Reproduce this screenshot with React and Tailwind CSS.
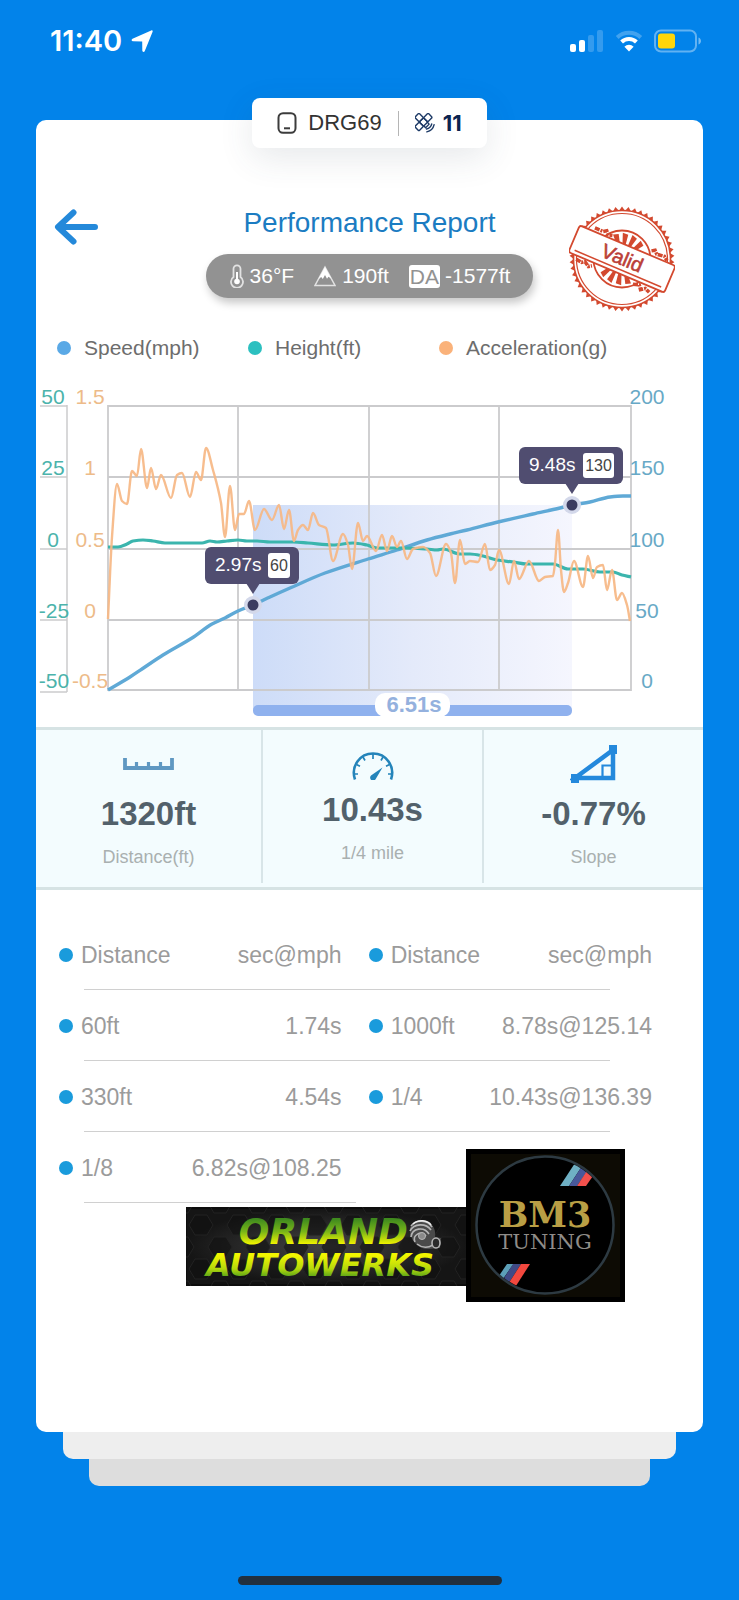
import React from "react";

const ACCELERATION = [
  [108, 619], [112, 537], [117, 484], [122, 501], [127, 504], [132, 471], [137, 476], [141, 449], [147, 488],
  [151, 468], [156, 489], [161, 475], [171, 498], [177, 475], [182, 473], [190, 497], [196, 472], [201, 480],
  [206, 448], [213, 470], [221, 503], [225, 537], [230, 486], [235, 530], [239, 514], [244, 514], [249, 501],
  [255, 530], [264, 509], [272, 520], [279, 505], [284, 529], [289, 510], [294, 541], [298, 530], [303, 525],
  [308, 530], [313, 513], [319, 525], [326, 528], [333, 561], [343, 534], [348, 545], [352, 569], [358, 523],
  [363, 541], [367, 536], [376, 551], [382, 535], [387, 551], [392, 536], [397, 547], [401, 541], [407, 559],
  [413, 549], [423, 547], [430, 553], [436, 576], [446, 544], [451, 553], [455, 583], [460, 540], [465, 564],
  [470, 561], [478, 562], [485, 544], [490, 570], [495, 565], [499, 550], [509, 584], [514, 561], [519, 579],
  [529, 561], [539, 581], [545, 577], [553, 576], [555, 563], [558, 530], [561, 570], [564, 592], [568, 583],
  [574, 561], [583, 587], [588, 556], [593, 578], [597, 567], [603, 565], [607, 590], [612, 570], [617, 600],
  [622, 593], [627, 605], [630, 621],
];

const HEIGHT = [
  [108, 547], [118, 547], [127, 544], [133, 541], [143, 540], [153, 541], [165, 543], [202, 543], [210, 541],
  [217, 542], [227, 541], [238, 540], [247, 541], [257, 541], [270, 542], [293, 542], [308, 543], [333, 545],
  [353, 543], [367, 545], [377, 548], [403, 548], [427, 549], [437, 550], [443, 549], [460, 554], [470, 554],
  [483, 556], [497, 560], [513, 562], [527, 564], [553, 564], [568, 569], [583, 569], [600, 572], [613, 572],
  [622, 575], [631, 577],
];

const SPEED = [
  [108, 690], [130, 677], [142, 669], [163, 655], [192, 638], [212, 624], [225, 618], [238, 611], [253, 605],
  [270, 597], [290, 588], [325, 573], [368, 559], [397, 550], [427, 540], [450, 534], [467, 530], [498, 522],
  [533, 514], [560, 508], [572, 505], [590, 502], [610, 497], [623, 496], [631, 496],
];

/* Smooth curve through the points, flat at every turning point. */
function curve(points) {
  const n = points.length;
  const slopes = points.map((p, i) => {
    if (i === 0 || i === n - 1) return 0;
    const a = (p[1] - points[i - 1][1]) / (p[0] - points[i - 1][0]);
    const b = (points[i + 1][1] - p[1]) / (points[i + 1][0] - p[0]);
    return a * b <= 0 ? 0 : (2 * a * b) / (a + b);
  });
  slopes[0] = (points[1][1] - points[0][1]) / (points[1][0] - points[0][0]);
  slopes[n - 1] = (points[n - 1][1] - points[n - 2][1]) / (points[n - 1][0] - points[n - 2][0]);
  let d = `M${points[0][0]} ${points[0][1]}`;
  for (let i = 1; i < n; i++) {
    const [x0, y0] = points[i - 1];
    const [x1, y1] = points[i];
    const h = (x1 - x0) / 3;
    d += `C${x0 + h} ${y0 + slopes[i - 1] * h} ${x1 - h} ${y1 - slopes[i] * h} ${x1} ${y1}`;
  }
  return d;
}

function StatusBar() {
  return (
    <header className="flex h-[82px] items-center justify-between pr-[37px] pl-[50px] text-white">
      <div className="flex items-center gap-2">
        <span className="font-[Inter,sans-serif] text-[29px] leading-8 font-semibold">11:40</span>
        <svg className="size-6" viewBox="0 0 24 24" aria-hidden="true">
          <path d="M21.200 1.400c1-.4 1.800.4 1.400 1.400l-7.800 19.200c-.6 1.400-2.500 1.100-2.500-.5l-.1-9-9.200-.2c-1.600 0-1.900-1.900-.5-2.500z" fill="#fff" />
        </svg>
      </div>
      <div className="flex items-center gap-[11px]">
        <svg className="h-6 w-[34px]" viewBox="0 0 34 24" aria-label="Signal" role="img">
          <rect x="0" y="15" width="6" height="8" rx="2" fill="#fff" />
          <rect x="9" y="11" width="6" height="12" rx="2" fill="#fff" />
          <rect x="18" y="6" width="6" height="17" rx="2" fill="#fff" opacity=".2" />
          <rect x="27" y="1" width="6" height="22" rx="2" fill="#fff" opacity=".2" />
        </svg>
        <svg className="h-6 w-7" viewBox="0 0 28 24" fill="none" aria-label="Wi-Fi" role="img">
          <path d="M2.200 8.500a17 17 0 0 1 23.600 0" stroke="#fff" strokeWidth="4" opacity=".25" />
          <path d="M6.600 13a10.600 10.600 0 0 1 14.800 0" stroke="#fff" strokeWidth="4" />
          <path d="M14 22.500l-4.600-4.800a6.600 6.600 0 0 1 9.200 0z" fill="#fff" />
        </svg>
        <svg className="h-6 w-12" viewBox="0 0 48 24" aria-label="Battery" role="img">
          <rect x="1" y="1.500" width="41" height="21" rx="6" fill="none" stroke="#fff" strokeWidth="2" opacity=".38" />
          <rect x="4" y="4.500" width="17" height="15" rx="3" fill="#ffd60a" />
          <path d="M44.500 8.500c3.300 1.200 3.300 5.800 0 7z" fill="#fff" opacity=".45" />
        </svg>
      </div>
    </header>
  );
}

function DeviceTab() {
  return (
    <div className="relative -mt-[22px] flex h-[50px] items-center self-center rounded-lg bg-white px-[25px] shadow-[0_10px_34px_rgba(60,70,90,0.12)]">
      <svg className="h-[22px] w-5" viewBox="0 0 20 22" fill="none" stroke="#3c3c3c" strokeWidth="2" aria-hidden="true">
        <rect x="1.500" y="1.200" width="17" height="19.600" rx="4.500" />
        <path d="M7 16.300h6" />
      </svg>
      <span className="ml-[11px] text-[22px] leading-7 text-[#333]">DRG69</span>
      <span className="mx-4 h-[25px] w-px bg-[#b5b5b5]" />
      <svg className="size-5" viewBox="0 0 20 20" fill="none" stroke="#1d3a66" strokeWidth="1.400" strokeLinecap="round" strokeLinejoin="round" aria-hidden="true">
        <g transform="translate(8.500 9) rotate(45)">
          <rect x="-3" y="-9.500" width="6" height="6.500" rx="1" />
          <rect x="-3" y="-3" width="6" height="6" rx="1" />
          <rect x="-3" y="3" width="6" height="6.500" rx="1" />
          <rect x="-9.500" y="-3" width="6.500" height="6" rx="1" />
          <path d="M3 -2.500h2.500v5H3" />
        </g>
        <path d="M11.500 16c2.700-.6 4.600-2.500 5.200-5M11.800 18.900c3.800-.8 6.500-3.500 7.300-7.200" />
      </svg>
      <span className="ml-2 font-[Inter,sans-serif] text-[22px] leading-7 font-bold text-[#0c2450]">11</span>
    </div>
  );
}

function ValidStamp() {
  const teeth = Array.from({ length: 50 }, (_, i) => i * 7.2);
  const rays = [-58, -36, -14, 8, 30, 52, 122, 144, 166, 188, 210, 232];
  return (
    <svg className="size-[106px]" viewBox="-53 -53 106 106" aria-label="Valid" role="img">
      <g fill="#d3492f">
        {teeth.map((a) => (
          <path key={a} d="M-2.800 -48.500L0 -52.500L2.800 -48.500z" transform={`rotate(${a})`} />
        ))}
      </g>
      <g fill="none" stroke="#d3492f">
        <circle r="48.500" strokeWidth="1.600" />
        <circle r="45.500" strokeWidth="1.200" />
        <circle r="28.500" strokeWidth="1.800" />
      </g>
      <g fill="#d3492f">
        {rays.map((a) => (
          <path key={a} d="M-1.300 -12L-2.800 -26L2.800 -25L1.300 -12z" transform={`rotate(${a})`} />
        ))}
      </g>
      <g transform="rotate(23)" stroke="#d3492f">
        <path d="M-37 -18h9l3-2 3 3 4-1M24 -19l3-2 3 3 8-1 4 3M-42 18l6 1 3-2 5 3 3-2M20 19l6-2 3 4 4-3 5 2" fill="none" strokeWidth="3.500" strokeDasharray="5 1 2 1" />
        <rect x="-52" y="-14.500" width="104" height="29" rx="2.500" fill="#fff" strokeWidth="1.800" />
        <path d="M-47 10.500H47" strokeWidth="1.500" />
        <text x="0" y="6" textAnchor="middle" fill="#bb3f38" stroke="#bb3f38" strokeWidth=".6" fontSize="20">Valid</text>
      </g>
    </svg>
  );
}

function ReportHeader() {
  return (
    <div className="mt-[58px] grid grid-cols-[1fr_auto_1fr] items-start px-[18px]">
      <button type="button" aria-label="Back" className="mt-[3px] h-9 w-11">
        <svg className="h-9 w-11" viewBox="0 0 44 36" fill="none" stroke="#2489da" strokeWidth="6" strokeLinecap="round" strokeLinejoin="round" aria-hidden="true">
          <path d="M41 18H4.500M19.500 3.500L4 18l15.500 14.500" />
        </svg>
      </button>
      <div className="flex flex-col items-center">
        <h1 className="text-[28px] leading-[34px] text-[#1b7cc2]">Performance Report</h1>
        <div className="mt-[14px] flex h-11 items-center rounded-full bg-[#929292] px-[23px] text-[21px] leading-7 text-white shadow-[2px_5px_8px_rgba(0,0,0,0.22)]">
          <svg className="h-6 w-4" viewBox="0 0 16 24" fill="none" aria-hidden="true">
            <path d="M4.500 13V4.800a3.500 3.500 0 0 1 7 0V13a6 6 0 1 1-7 0z" stroke="#e2e2e2" strokeWidth="1.800" />
            <path d="M8 8v9" stroke="#fff" strokeWidth="2" />
            <circle cx="8" cy="17.500" r="2.800" fill="#fff" />
          </svg>
          <span className="ml-[5px]">36°F</span>
          <svg className="ml-5 h-[22px] w-[22px]" viewBox="0 0 22 22" fill="none" aria-hidden="true">
            <path d="M11 2L21 20.500H1z" stroke="#e2e2e2" strokeWidth="1.500" />
            <path d="M11 2l6.200 11.500-2.700-1.800-1.500 2-2-3.700-2.200 4-1.600-2-2.700 2z" fill="#fff" />
          </svg>
          <span className="ml-1.5">190ft</span>
          <span className="ml-5 rounded-[3px] bg-white px-px leading-[23px] text-[#929292]">DA</span>
          <span className="ml-[5px]">-1577ft</span>
        </div>
      </div>
      <div className="mr-2.5 justify-self-end">
        <ValidStamp />
      </div>
    </div>
  );
}

function Legend() {
  const items = [
    ["Speed(mph)", "bg-[#5aa9e6]"],
    ["Height(ft)", "bg-[#2cc0c0]"],
    ["Acceleration(g)", "bg-[#fab27a]"],
  ];
  return (
    <ul className="mt-[22px] grid grid-cols-3 pr-[73px] pl-[21px] text-[21px] leading-7 text-[#6d6d6d]">
      {items.map(([label, color]) => (
        <li key={label} className="flex items-center gap-[13px] whitespace-nowrap">
          <span className={`size-3.5 shrink-0 rounded-full ${color}`} />
          {label}
        </li>
      ))}
    </ul>
  );
}

function Marker({ x, y, left, width, time, value, badge }) {
  return (
    <g>
      <rect x={left} y={y - 58} width={width} height="37" rx="6" fill="#504d70" />
      <path d={`M${x - 7} ${y - 22}h14l-7 11z`} fill="#504d70" />
      <text x={left + 10} y={y - 34} fill="#fff" fontSize="19">{time}</text>
      <rect x={left + width - 9 - badge} y={y - 52} width={badge} height="25" rx="3" fill="#fff" />
      <text x={left + width - 9 - badge / 2} y={y - 34} fill="#444" fontSize="16" textAnchor="middle">{value}</text>
      <circle cx={x} cy={y} r="9" fill="#d3d8ea" />
      <circle cx={x} cy={y} r="5.500" fill="#3b3c60" />
    </g>
  );
}

function Chart() {
  const ys = [406, 477, 549, 620, 690];
  return (
    <svg className="mt-[18px] w-full" viewBox="36 380 667 347" aria-label="Speed, height and acceleration over time" role="img">
      <defs>
        <linearGradient id="span" x1="0" x2="1" y1="0" y2="0">
          <stop offset="0" stopColor="#cddcf8" />
          <stop offset=".5" stopColor="#e4eafa" />
          <stop offset="1" stopColor="#f5f6fe" />
        </linearGradient>
      </defs>
      <rect x="253" y="505" width="319" height="205" fill="url(#span)" />
      <g stroke="#cbcbcd" strokeWidth="1.800" fill="none">
        {ys.map((y) => <path key={y} d={`M108 ${y}H631`} />)}
        {[108, 238, 369, 499, 631].map((x) => <path key={x} d={`M${x} 405V691`} />)}
        <path d="M67 405V692M40 406H67M40 477H67M40 549H67M40 620H67M40 692H67" strokeWidth="1.500" />
      </g>
      <g fontSize="21" textAnchor="middle">
        {["50", "25", "0", "-25", "-50"].map((t, i) => (
          <text key={t} x={i > 2 ? 54 : 53} y={ys[i] - 2} fill="#4bb3ab">{t}</text>
        ))}
        {["1.5", "1", "0.5", "0", "-0.5"].map((t, i) => (
          <text key={t} x="90" y={ys[i] - 2} fill="#edbb89">{t}</text>
        ))}
        {["200", "150", "100", "50", "0"].map((t, i) => (
          <text key={t} x="647" y={ys[i] - 2} fill="#68a9c6">{t}</text>
        ))}
      </g>
      <g fill="none" strokeLinejoin="round">
        <path d={curve(SPEED)} stroke="#5fa9d6" strokeWidth="3.400" />
        <path d={curve(HEIGHT)} stroke="#3bb5ad" strokeWidth="3.200" />
        <path d={curve(ACCELERATION)} stroke="#f6b784" strokeWidth="2.400" opacity=".92" />
      </g>
      <rect x="253" y="705" width="319" height="11" rx="5" fill="#8fb1ee" />
      <rect x="375" y="693" width="75" height="24" rx="10" fill="#fff" />
      <text x="414" y="712" fill="#94b1de" fontSize="22" fontWeight="700" textAnchor="middle">6.51s</text>
      <Marker x={253} y={605} left={205} width={94} badge={22} time="2.97s" value="60" />
      <Marker x={572} y={505} left={519} width={104} badge={31} time="9.48s" value="130" />
    </svg>
  );
}

function RulerIcon() {
  return (
    <svg className="h-3 w-[51px]" viewBox="0 0 51 12" fill="none" stroke="#5f98c2" aria-hidden="true">
      <path d="M2 0v10h47V0" strokeWidth="3.800" />
      <path d="M13.500 4V10M25.500 4V10M37.500 4V10" strokeWidth="3.200" />
    </svg>
  );
}

function GaugeIcon() {
  return (
    <svg className="h-7 w-[42px]" viewBox="0 0 42 28" fill="none" stroke="#2484ba" aria-hidden="true">
      <path d="M3 27.500C-1.500 14 8 1.500 21 1.500S43.500 14 39 27.500" strokeWidth="2.600" />
      <path d="M21 2v5M11 5l2 3.500M31 5l-2 3.500M4.500 12.500l3.500 1.800M37.500 12.500L34 14.300M2 22h4M40 22h-4" strokeWidth="1.700" />
      <path d="M30.500 15.500l-6.500 11a3 3 0 1 1-5-3z" fill="#2484ba" stroke="none" />
    </svg>
  );
}

function SlopeIcon() {
  return (
    <svg className="h-[38px] w-12" viewBox="0 0 48 38" fill="none" stroke="#2489dc" aria-hidden="true">
      <path d="M5 33L43 5v28z" strokeWidth="4.500" />
      <path d="M41 20.500h-8.500V31" strokeWidth="2.200" />
      <path d="M39 0H47v9H39zM1 29h8V38H1z" fill="#2489dc" stroke="none" />
    </svg>
  );
}

function Stat({ icon, value, label, raised }) {
  return (
    <div className="flex flex-col items-center pt-3 pb-[14px]">
      <div className={raised ? "flex h-12 items-center" : "mb-2 flex h-11 items-center"}>{icon}</div>
      <p className="text-[33px] leading-10 font-bold text-[#52616b]">{value}</p>
      <p className="mt-[11px] text-[18px] leading-6 text-[#a9b0b0]">{label}</p>
    </div>
  );
}

function Stats() {
  return (
    <section className="grid grid-cols-[227fr_221fr_219fr] divide-x-2 divide-[#d8e5e8] border-y-[3px] border-[#d6e3e4] bg-[#f3fcfe] pb-1">
      <Stat icon={<RulerIcon />} value="1320ft" label="Distance(ft)" />
      <Stat icon={<GaugeIcon />} value="10.43s" label="1/4 mile" raised />
      <Stat icon={<SlopeIcon />} value="-0.77%" label="Slope" />
    </section>
  );
}

function Label({ as: Tag = "td", second, children }) {
  return (
    <Tag className={second ? "pl-[25px] text-left font-normal" : "text-left font-normal"}>
      <span className="flex items-center gap-2">
        <span className="size-3.5 shrink-0 rounded-full bg-[#1a9bdc]" />
        {children}
      </span>
    </Tag>
  );
}

function Splits() {
  const rows = [
    ["60ft", "1.74s", "1000ft", "8.78s@125.14"],
    ["330ft", "4.54s", "1/4", "10.43s@136.39"],
    ["1/8", "6.82s@108.25"],
  ];
  const line = "relative h-[71px] after:absolute after:bottom-0 after:left-[25px] after:h-px after:bg-[#d0d0d0]";
  return (
    <div className="mt-[29px] pr-[51px] pl-[23px]">
      <table className="w-full table-fixed text-[23px] leading-7 whitespace-nowrap text-[#9b9b9b]">
        <colgroup>
          <col className="w-[20%]" />
          <col className="w-[28%]" />
          <col className="w-[24%]" />
          <col className="w-[28%]" />
        </colgroup>
        <thead>
          <tr className={`${line} after:right-[42px]`}>
            <Label as="th">Distance</Label>
            <th className="pr-0.5 text-right font-normal">sec@mph</th>
            <Label as="th" second>Distance</Label>
            <th className="text-right font-normal">sec@mph</th>
          </tr>
        </thead>
        <tbody>
          {rows.map((r) => (
            <tr key={r[0]} className={r[2] ? `${line} after:right-[42px]` : `${line} after:right-1/2`}>
              <Label>{r[0]}</Label>
              <td className="pr-0.5 text-right">{r[1]}</td>
              {r[2] && <Label second>{r[2]}</Label>}
              {r[3] && <td className="text-right">{r[3]}</td>}
            </tr>
          ))}
        </tbody>
      </table>
    </div>
  );
}

function OrlandoLogo() {
  const cells = [];
  for (let r = 0; r < 5; r++) {
    for (let c = 0; c < 9; c++) cells.push([c * 38 + (r % 2) * 19 - 4, r * 22 - 4]);
  }
  return (
    <svg className="mt-1 h-[79px] w-[280px]" viewBox="0 0 280 79" aria-label="Orlando Autowerks" role="img">
      <defs>
        <linearGradient id="up" x1="0" x2="0" y1="0" y2="1">
          <stop offset=".2" stopColor="#3f8a1e" />
          <stop offset=".5" stopColor="#79b518" />
          <stop offset=".8" stopColor="#eef200" />
        </linearGradient>
        <linearGradient id="down" x1="0" x2="0" y1="0" y2="1">
          <stop offset=".25" stopColor="#f2f500" />
          <stop offset=".6" stopColor="#b4d80c" />
          <stop offset=".85" stopColor="#4a9a1a" />
        </linearGradient>
        <radialGradient id="glow">
          <stop offset="0" stopColor="#444" />
          <stop offset="1" stopColor="#151515" />
        </radialGradient>
      </defs>
      <rect width="280" height="79" fill="#0c0c0c" />
      <rect x="1" y="2" width="279" height="75" fill="url(#glow)" />
      <g fill="#101010" fillOpacity=".6" stroke="#222" strokeWidth="1">
        {cells.map(([x, y]) => (
          <path key={`${x} ${y}`} d={`M${x - 12} ${y}l6-10h12l6 10l-6 10h-12z`} />
        ))}
      </g>
      <g fontWeight="700" fontStyle="italic" fontFamily="'DejaVu Sans', sans-serif">
        <text x="222" y="37" fontSize="36" fill="url(#up)" textAnchor="end">ORLAND</text>
        <text x="134" y="69" fontSize="32" fill="url(#down)" textAnchor="middle">AUTOWERKS</text>
      </g>
      <g fill="none" stroke="#b5b5b5">
        <path d="M224 21c2-7 12-10 18-6 6 3 8 9 7 15l6 1-1 10-11 1c-10 1-20-9-19-21z" fill="#4a4a4a" stroke="none" />
        <path d="M225 19c5-7 17-6 21 1M224 24c4-8 16-8 21-1M225 30c1-9 13-11 18-3M229 35c-3-7 6-12 11-6M231 37c5 4 11 4 16 1" strokeWidth="1.600" />
        <path d="M227 17c5-5 15-4 18 1" stroke="#eee" strokeWidth="1.500" />
        <circle cx="236" cy="29" r="3.500" fill="#8a8a8a" strokeWidth="1" />
        <ellipse cx="250" cy="36" rx="4" ry="5" fill="#2a2a2a" strokeWidth="1.600" />
      </g>
    </svg>
  );
}

function Bm3Logo() {
  return (
    <svg className="-mt-[54px] h-[153px] w-[159px]" viewBox="0 0 159 153" aria-label="BM3 Tuning" role="img">
      <defs>
        <clipPath id="disc"><circle cx="79" cy="76" r="67" /></clipPath>
      </defs>
      <rect width="159" height="153" fill="#000" />
      <rect x="5" y="5" width="149" height="143" fill="#0d0b04" />
      <circle cx="79" cy="76" r="68.500" fill="#000" stroke="#2d3a42" strokeWidth="2.500" />
      <g clipPath="url(#disc)">
        <path d="M94 37l17-26h9L103 37z" fill="#6fb0c4" />
        <path d="M103 37l17-26h9L111 37z" fill="#48589a" />
        <path d="M111 37l17-26h10L120 37z" fill="#f2504c" />
        <path d="M24 140l17-25h6.500L30 140z" fill="#5c9fb8" />
        <path d="M31 140l16-25h8L39 140z" fill="#3f4a86" />
        <path d="M39 140l16-25h9L48 140z" fill="#f2483e" />
      </g>
      <g textAnchor="middle" fontFamily="'DejaVu Serif', serif">
        <text x="79" y="78" fontSize="35" fontWeight="700" fill="#b99f45">BM3</text>
        <text x="79" y="100" fontSize="21" fill="#8f8c88">TUNING</text>
      </g>
    </svg>
  );
}

export default function App() {
  return (
    <main className="flex min-h-screen flex-col bg-[#0283ea] font-['Liberation_Sans',Arial,sans-serif]">
      <StatusBar />
      <article className="mx-9 mt-[38px] flex flex-col rounded-[10px] bg-white pb-[130px]">
        <DeviceTab />
        <ReportHeader />
        <Legend />
        <Chart />
        <Stats />
        <Splits />
        <div className="flex items-start pl-[150px]">
          <OrlandoLogo />
          <Bm3Logo />
        </div>
      </article>
      <div className="mx-[63px] h-[27px] rounded-b-[10px] bg-[#eee]" />
      <div className="mx-[89px] h-[27px] rounded-b-[10px] bg-[#ddd]" />
      <div className="mt-auto mb-[15px] h-[9px] w-[264px] self-center rounded-full bg-[#22303f]" />
    </main>
  );
}
